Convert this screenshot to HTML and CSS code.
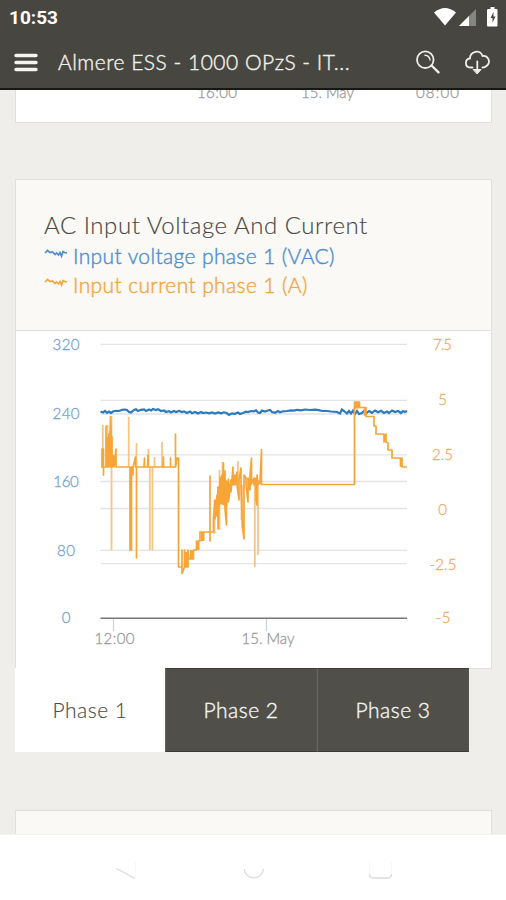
FILE: index.html
```html
<!DOCTYPE html>
<html lang="en">
<head>
<meta charset="utf-8">
<title>Almere ESS</title>
<link rel="stylesheet" href="styles.css">
</head>
<body>
<div class="screen">
  <header class="top">
    <div class="status">
      <span class="clock">10:53</span>
      <svg class="status-icons" width="70" height="26" viewBox="432 4 70 26">
        <path d="M434 12.500Q445 3.500 456 12.500L445 25.500Z" fill="#fff"/>
        <path d="M459 26L476 9V26Z" fill="#858581"/>
        <path d="M459 26L469 16V26Z" fill="#fff"/>
        <path d="M488.500 9h2V7h4v2h2q1 0 1 1v15.500q0 1-1 1h-8.500q-1 0-1-1V10q0-1 1.500-1Z" fill="#fff"/>
        <path d="M493.500 12L490.500 18H492.500V22.500L495.500 16.500H493.500Z" fill="#474640"/>
      </svg>
    </div>
    <div class="toolbar">
      <svg class="menu" width="24" height="20" viewBox="0 0 24 20"><path d="M2 2.500H22M2 9.500H22M2 16.500H22" stroke="#f4f4f1" stroke-width="3.400" stroke-linecap="round"/></svg>
      <h1 class="site">Almere ESS - 1000 OPzS - IT...</h1>
      <svg class="tools" width="82" height="30" viewBox="412 47 82 30" fill="none" stroke="#efefea" stroke-width="1.800" stroke-linecap="round" stroke-linejoin="round">
        <circle cx="425.300" cy="58.700" r="8.300"/>
        <path d="M425 54.200Q429.500 54.500 430 59" stroke-width="1.400"/>
        <path d="M431.500 64.500L438.500 71.300" stroke-width="2.400"/>
        <path d="M472.500 66.500H470.500C464.500 66.500 464.500 58 470 57.500C470 50 480.500 48 482.500 55C488 54 491.500 61 486.500 65Q485 66.500 482.500 66.500"/>
        <path d="M477.300 60.500V70" stroke-width="1.800"/>
        <path d="M473.500 68.500H481.100L477.300 72.700Z" fill="#efefea" stroke-width="1"/>
      </svg>
    </div>
  </header>
  <main class="content">
    <section class="card previous">
      <svg width="475" height="32" viewBox="16 90 475 32">
        <g class="tick">
          <text x="197" y="97.500" textLength="40">16:00</text>
          <text x="301" y="97.500" textLength="53">15. May</text>
          <text x="416" y="97.500" textLength="43">08:00</text>
        </g>
      </svg>
    </section>
    <section class="card chart">
      <div class="heading">
        <h2 class="title">AC Input Voltage And Current</h2>
        <div class="legend volt"><svg width="24" height="12" viewBox="0 0 24 12"><path d="M1 5L3.500 2.500L6 4.500L8.500 4L11 6.500L12.500 5L14.500 7L16 4.500L17.500 8L19 3.500L20.500 4.500L23 5"/></svg><span class="volt-name">Input voltage phase 1 (VAC)</span></div>
        <div class="legend amp"><svg width="24" height="12" viewBox="0 0 24 12"><path d="M1 5L3.500 2.500L6 4.500L8.500 4L11 6.500L12.500 5L14.500 7L16 4.500L17.500 8L19 3.500L20.500 4.500L23 5"/></svg><span class="amp-name">Input current phase 1 (A)</span></div>
      </div>
      <svg class="plot" width="475" height="337" viewBox="16 331 475 337">
        <path class="grid" d="M100.500 344.300H407M100.500 400.300H407M100.500 414H407M100.500 454.800H407M100.500 481.500H407M100.500 508.500H407M100.500 550.300H407M100.500 563.700H407"/>
        <path class="voltline" d="M100.500 411.500L103 412.500L105 411L107 412.800L109 411.500L111 413L113 411.500L116 410.800L119 411L122 409.800L125 409.500L127 410L129 412L131 412.500L134 410L136 409.300L138 411L141 409.800L144 409.500L146 411L149 409.500L151 410.500L153 409L156 410L158 409.200L161 411L164 410.500L166 412L169 411.200L171 412.500L174 411L176 412L179 411L182 412L184 411.500L187 413L190 411.500L192 413.200L195 412L198 413.500L201 412L203 413L206 412.500L209 413.300L212 412.500L215 413.500L218 412.500L221 413.300L224 412.300L227 413.300L229 415L232 413.300L235 413.800L238 412.500L240 414L243 413L246 411.700L248 412L251 411L254 411.300L256 410.300L258 412.500L260 413L262 410.500L265 411.500L268 410.500L270 410L272 412L275 412.800L278 411L280 412.200L283 411.300L287 411L291 410.300L294 410.600L297 409.800L301 410.300L305 409.500L310 410L315 409.600L319 410.200L322 411L327 411L331 411.500L337 412L340 413.500L342 409.500L344 411L347 413.500L349 411L351 413.500L353 410.500L355 414L357 411L359 414L362 413L364 411L366 413.500L369 411L372 412.800L375 410.500L378 412.300L381 410.800L384 413L387 411.500L389 413L392 410.500L395 412L398 411L401 413L403 411L405 412L407 411"/>
        <path class="spikes" d="M102.800 467V425M107.500 467V425M111.500 550V416M128.700 467V417M136.500 467V443M148.500 467V449M154.500 467V457M162 467V442M149.800 467V550M152.500 467V550M214.500 534V500M219.500 530V470M222.500 505V462M238 485V461M242.500 485V528M254.800 567V485M258 555V480M241.500 520V485"/>
        <path class="ampline" d="M101 467H102V449H103.500V475V467H106V426V467L107.500 438V467L109 434V467L110.500 418V467V416.500L112 467V437V467L114 458V467L116 449V467H130V550L131.500 467V550V467L133 475V467L135.500 457V467H136.500V558V467H144L144.500 458V467H147.500L148 455V467H163L163.500 457V467H170.500V458V467H175.500V434V467L177 458H178.500V567H182V550V573.500L184.500 567V550V567H188V550L189 559H193.500V550H196.500V541H200V532H210V541V476V532H213.500V518L215 500V519L217 495V516L218 487V529L220 477V504L222 475V503L223.500 463V504L225 471V509L226.500 525V481V505L228.500 479V502L231 480V492L233 467V485L235 475V485L237 472V485L239 500V480L241 468V485L242.500 528L244 539V485V475L246 478V485L248 502V478L250 490V475L251.500 458V484L254 478V485L256 478V500L257 505V475L258 484L260 483L261.500 449.500V484.500H354.500V402H356V408V402H358V408V402H359.500V407.500H364.500V415L366 407.500V416.500H374V426L376 426V434H384V442L386 434V442L388 443V450H392V458H400.500V466L402 458V467H407"/>
        <path class="burst" d="M106 467V442L110 430L112 455H114.500V467ZM219 503L221 483L226 477V507L229 500V485L231 480V487L227 507ZM354.500 402H360V408H354.500ZM185 567V552H188V567ZM190 550H194V559H190ZM196.500 541H199.500V550H196.500ZM201 532H204.500V541H201ZM130 467H132V550H130Z"/>
        <path d="M100.500 618.200H407" stroke="#77767b" stroke-width="1.500"/>
        <path d="M113.500 619V631M266.500 619V631" stroke="#c9d0e8" stroke-width="1.200"/>
        <g class="left-axis">
          <text x="66" y="350.300" textLength="27">320</text><text x="66" y="418.500" textLength="27">240</text><text x="66" y="487" textLength="25.500">160</text><text x="66" y="555.500" textLength="18">80</text><text x="66" y="623">0</text>
        </g>
        <g class="right-axis">
          <text x="442.500" y="350.300" textLength="19">7.5</text><text x="442.500" y="405">5</text><text x="442.500" y="460" textLength="21">2.5</text><text x="442.500" y="515">0</text><text x="443" y="570" textLength="27">-2.5</text><text x="443" y="623" textLength="15">-5</text>
        </g>
        <g class="tick"><text x="94.500" y="644" textLength="40">12:00</text><text x="241.500" y="644" textLength="53">15. May</text></g>
      </svg>
    </section>
    <nav class="phases">
      <span class="phase active">Phase 1</span><span class="phase">Phase 2</span><span class="phase">Phase 3</span>
    </nav>
    <section class="card next"></section>
  </main>
  <footer class="navbar">
    <svg width="506" height="66" viewBox="0 835 506 66" fill="none" stroke="#dcdcdc" stroke-width="1.300">
      <path d="M116.500 868.500L135 878.500"/>
      <path d="M135.500 878V862M369.500 874V862M391.500 874V862" stroke="#f8f8f8"/>
      <path d="M244 869C245 880.500 262 881 263.500 869"/>
      <path d="M369.500 874Q369.500 878 373 878H388Q391.500 878 391.500 874"/>
    </svg>
  </footer>
</div>
</body>
</html>
```
FILE: styles.css
```css
* { box-sizing: border-box; }
body { margin: 0; background: #efeeea; font-family: Lato, "Open Sans", sans-serif; font-weight: 300; color: #4b4a46; }
svg { display: block; flex: none; }
h1, h2 { margin: 0; font-weight: 300; }
.screen { width: 506px; height: 900px; display: flex; flex-direction: column; overflow: hidden; }
.top { height: 90px; flex: none; background: #474640; border-bottom: 2px solid #171713; color: #f0f0eb; }
.status { height: 34px; display: flex; justify-content: space-between; padding: 4px 4px 0 9px; }
.clock { font: 700 19px/27px Roboto, sans-serif; color: #fff; white-space: nowrap; }
.toolbar { height: 54px; display: flex; align-items: center; padding: 3px 12px 0 14px; }
.site { flex: 1; margin: -2px 0 0 20px; font-size: 21px; line-height: 30px; letter-spacing: 0.5px; -webkit-text-stroke: 0.4px currentColor; white-space: nowrap; }
.content { flex: 1; min-height: 0; padding: 0 14px 0 15px; display: flex; flex-direction: column; overflow: hidden; }
.card { flex: none; border: 1px solid #dfdfdb; background: #fff; }
.previous { height: 33px; border-top: 0; }
.chart { height: 490px; margin-top: 56px; }
.heading { height: 151px; padding: 29px 28px 0; background: #faf9f5; border-bottom: 1px solid #dfdfdb; }
.title { margin-bottom: 1px; font-size: 24px; line-height: 31px; letter-spacing: 0.55px; -webkit-text-stroke: 0.15px currentColor; white-space: nowrap; }
.legend { height: 29px; display: flex; align-items: center; gap: 5px; font-size: 21px; line-height: 29px; -webkit-text-stroke: 0.4px currentColor; white-space: nowrap; }
.legend svg { margin-top: -4px; }
.legend path { fill: none; stroke: currentColor; stroke-width: 1.7; }
.volt { color: #4e8ed0; }
.amp { color: #f5a542; }
.volt-name, .amp-name { letter-spacing: 0.38px; }
.plot text, .tick text { font-size: 15px; stroke: currentColor; stroke-width: 0.3px; }
.plot path { fill: none; }
.plot .grid { stroke: #e4e4e4; stroke-width: 1.3; }
.plot .voltline { stroke: #2b7bc0; stroke-width: 2.2; }
.plot .ampline { stroke: #f6a536; stroke-width: 1.7; stroke-linejoin: round; }
.plot .spikes { stroke: #f9c483; stroke-width: 1.8; }
.plot .burst { fill: #f6a536; }
.left-axis { color: #719fd5; fill: #719fd5; text-anchor: middle; }
.right-axis { color: #f5aa60; fill: #f5aa60; text-anchor: middle; }
.tick { color: #999; fill: #999; }
.phases { width: 454px; height: 84px; margin-top: -1px; flex: none; display: grid; grid-template-columns: 150px 152px 152px; }
.phase { display: flex; align-items: center; justify-content: center; padding-bottom: 2px; background: #504f49; border: 1px solid #3c3b36; border-left-color: #66655f; border-right-color: #55544f; color: #f5f5f0; font-size: 21px; letter-spacing: 0.5px; -webkit-text-stroke: 0.4px currentColor; }
.phase.active { background: #fff; border-color: #fff; color: #4b4a46; -webkit-text-stroke-width: 0.15px; }
.next { height: 30px; margin-top: 58px; background: #faf9f5; border-bottom: 0; }
.navbar { height: 66px; flex: none; background: #fff; border-top: 1px solid #f2f2f0; }
```
